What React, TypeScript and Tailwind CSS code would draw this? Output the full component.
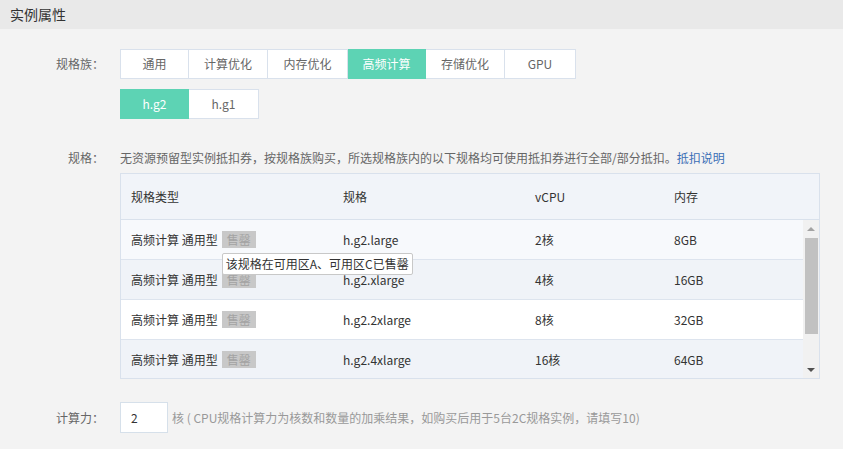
import React from "react";

const families = [
  { name: "通用", w: "w-[69px]" },
  { name: "计算优化", w: "w-[79px]" },
  { name: "内存优化", w: "w-[80px]" },
  { name: "高频计算", w: "w-[78px]", active: true },
  { name: "存储优化", w: "w-[79px]" },
  { name: "GPU", w: "w-[71px]" },
];

const rows = [
  { spec: "h.g2.large", cpu: "2核", mem: "8GB", bg: "bg-[#f7f9fc]", tip: true },
  { spec: "h.g2.xlarge", cpu: "4核", mem: "16GB", bg: "bg-[#f0f3f8]" },
  { spec: "h.g2.2xlarge", cpu: "8核", mem: "32GB", bg: "bg-white" },
  { spec: "h.g2.4xlarge", cpu: "16核", mem: "64GB", bg: "bg-[#f0f3f8]" },
];

export default function App() {
  return (
    <div
      className="min-h-[449px] w-[843px] bg-[#f3f3f3] text-[12px] text-[#666] overflow-hidden"
      style={{ fontFamily: '"Noto Sans CJK SC", "Noto Sans", sans-serif' }}
    >
      <div className="h-[29px] bg-[#e9e9e9] pl-[10px] flex items-center text-[14px] text-[#333]">
        实例属性
      </div>

      <div className="flex mt-[20px]">
        <div className="w-[104px] shrink-0 text-right h-[30px] leading-[30px]">规格族：</div>
        <div className="ml-[16px] flex flex-col">
          <div className="flex">
            {families.map((f, i) => (
              <div
                key={f.name}
                className={`${f.w} h-[30px] flex items-center justify-center border-y border-r ${
                  i === 0 ? "border-l" : ""
                } ${
                  f.active
                    ? "bg-[#5dd3b4] border-[#5dd3b4] text-white"
                    : "bg-white border-[#d9e1ec] text-[#666]"
                }`}
              >
                {f.name}
              </div>
            ))}
          </div>
          <div className="flex mt-[10px]">
            <div className="w-[69px] h-[30px] flex items-center justify-center bg-[#5dd3b4] border border-[#5dd3b4] text-white">
              h.g2
            </div>
            <div className="w-[70px] h-[30px] flex items-center justify-center bg-white border-y border-r border-[#d9e1ec] text-[#666]">
              h.g1
            </div>
          </div>
        </div>
      </div>

      <div className="flex mt-[30px]">
        <div className="w-[104px] shrink-0 text-right leading-[18px]">规格：</div>
        <div className="ml-[16px] flex flex-col">
          <div className="leading-[18px]">
            无资源预留型实例抵扣券，按规格族购买，所选规格族内的以下规格均可使用抵扣券进行全部/部分抵扣。
            <span className="text-[#3b6fb6]">抵扣说明</span>
          </div>
          <div className="mt-[6px] w-[700px] border border-[#d9e1ec] bg-white text-[#333]">
            <div className="flex h-[46px] items-center bg-[#f1f4f9] border-b border-[#d9e1ec]">
              <div className="w-[212px] pl-[10px]">规格类型</div>
              <div className="w-[192px] pl-[10px]">规格</div>
              <div className="w-[139px] pl-[10px]">vCPU</div>
              <div className="flex-1 pl-[10px]">内存</div>
            </div>
            <div className="flex h-[158px] overflow-hidden">
              <div className="flex-1 flex flex-col">
                {rows.map((r) => (
                  <div
                    key={r.spec}
                    className={`flex h-[40px] shrink-0 items-center border-b border-[#dde4ee] ${r.bg}`}
                  >
                    <div className="w-[212px] pl-[10px] flex items-center">
                      <span>高频计算 通用型</span>
                      <span className="relative ml-[4px] bg-[#c8c8c8] text-[#a3a3a3] px-[5px] h-[17px] leading-[17px]">
                        售罄
                        {r.tip && (
                          <span className="absolute left-0 top-[22px] z-10 whitespace-nowrap bg-white border border-[#c8c8c8] rounded-[2px] text-[#333] px-[3px] h-[22px] leading-[20px]">
                            该规格在可用区A、可用区C已售罄
                          </span>
                        )}
                      </span>
                    </div>
                    <div className="w-[192px] pl-[10px]">{r.spec}</div>
                    <div className="w-[139px] pl-[10px]">{r.cpu}</div>
                    <div className="flex-1 pl-[10px]">{r.mem}</div>
                  </div>
                ))}
              </div>
              <div className="w-[16px] shrink-0 bg-[#f1f1f1] flex flex-col items-center">
                <div className="h-[17px] flex items-center justify-center">
                  <svg width="8" height="4" viewBox="0 0 8 4">
                    <path d="M4 0 L8 4 L0 4 Z" fill="#a3a3a3" />
                  </svg>
                </div>
                <div className="w-[13px] h-[96px] bg-[#c1c1c1] mt-[1px]" />
                <div className="flex-1" />
                <div className="h-[17px] flex items-center justify-center">
                  <svg width="8" height="4" viewBox="0 0 8 4">
                    <path d="M0 0 L8 0 L4 4 Z" fill="#505050" />
                  </svg>
                </div>
              </div>
            </div>
          </div>
        </div>
      </div>

      <div className="flex mt-[23px] items-center">
        <div className="w-[104px] shrink-0 text-right">计算力：</div>
        <div className="ml-[16px] w-[48px] h-[31px] bg-white border border-[#d6e0ea] pl-[10px] flex items-center text-[#333]">
          2
        </div>
        <div className="ml-[4px] text-[#999]">
          核 ( CPU规格计算力为核数和数量的加乘结果，如购买后用于5台2C规格实例，请填写10)
        </div>
      </div>
    </div>
  );
}
